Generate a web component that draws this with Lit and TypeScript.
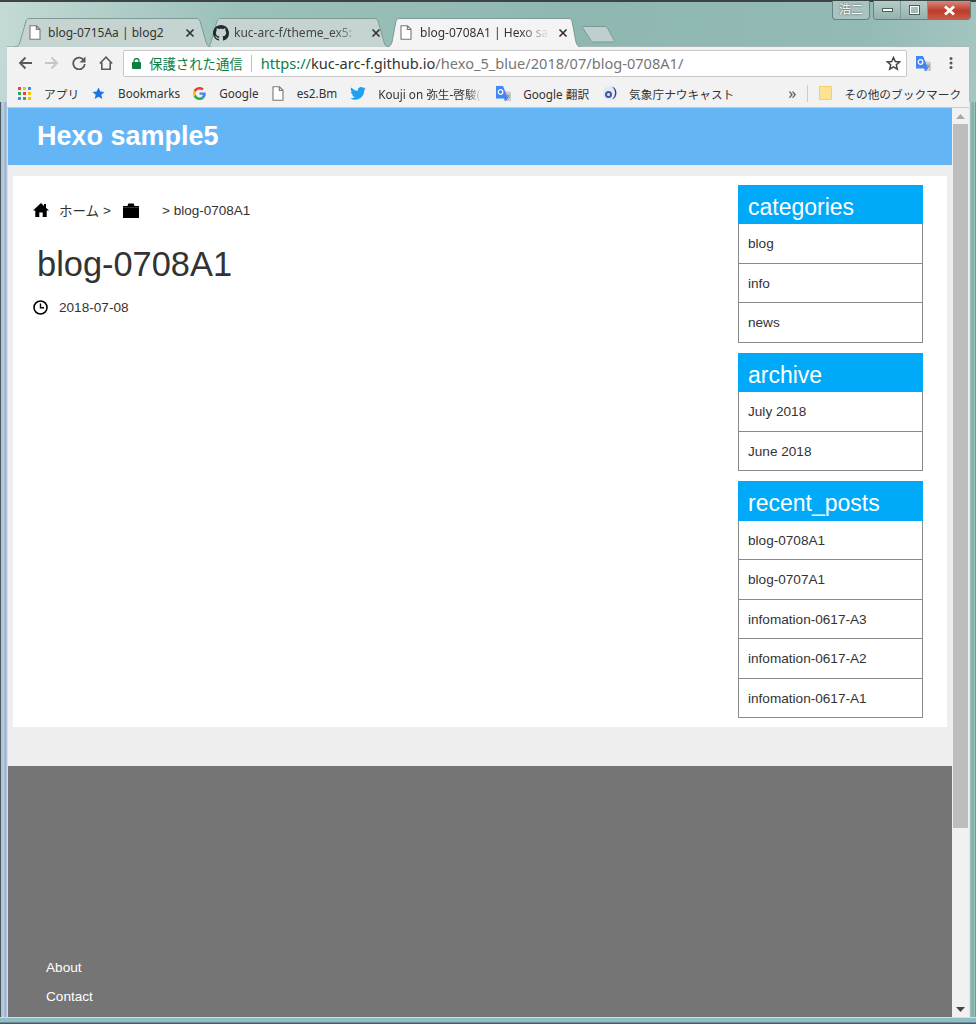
import { LitElement, html, css, svg } from "lit";
import { customElement } from "lit/decorators.js";

const doc = (cls = "ic") => html`<svg class=${cls} width="12" height="15" viewBox="0 0 12 15"><path d="M1 .8h6.500L11 4.300v9.900H1z M7.300 .8v3.700H11" fill="#fff" stroke="#777" stroke-width="1.100"/></svg>`;
const closeX = html`<svg class="x" width="10" height="10" viewBox="0 0 10 10"><path d="M1.500 1.500l7 7m0-7l-7 7" stroke="#333" stroke-width="1.700"/></svg>`;
const translate = html`<svg width="17" height="17" viewBox="0 0 17 17"><path d="M9 6l7 1v9l-5 0z" fill="#c9ccd0"/><path d="M12 9.500l2.600 3.500m0-3.500l-2.600 3.500" stroke="#888" stroke-width="1"/><path d="M1 1h7l5 12.500-3 3-1-3H1z" fill="#4285f4"/><circle cx="5.500" cy="7" r="2.300" fill="none" stroke="#fff" stroke-width="1.200"/></svg>`;

@customElement("app-root")
export class AppRoot extends LitElement {
  static styles = css`
    :host { display: block; width: 976px; height: 1024px; overflow: hidden; font-family: "Liberation Sans", Arial, sans-serif; color: #333; }
    .win { position: relative; box-sizing: border-box; width: 976px; height: 1024px; display: flex; flex-direction: column; padding: 0 7px 7px 7px;
      background:
        linear-gradient(180deg, #d5dde0 0 1px, #8fbcc9 1px, #8fbcc9 5px, #4d5a5c 6px) 0 100% / 100% 7px no-repeat,
        linear-gradient(90deg, #4d5a5c 0 1px, #9db9d4 1px, #b9d3ec 3px, #90aac8 6px, #d8dfe4 7px) 0 100px / 8px 100% no-repeat,
        linear-gradient(90deg, #dfe6e6 0 1px, #9cc6c0 1px, #7fa9a4 4px, #a8ccc8 6px, #4d5a5c 7px) 100% 100px / 7px 100% no-repeat,
        linear-gradient(100deg, #c4dad6 0%, #9cc1bb 20%, #8fb7b1 50%, #93bab5 75%, #bcd5d1 100%);
      border-top: 2px solid #3c4543; }
    .chromef { font-family: "Noto Sans", "Noto Sans CJK JP", sans-serif; }
    .controls { position: absolute; top: -1px; right: 5px; display: flex; gap: 3px; }
    .user { width: 36px; height: 18px; border: 1px solid #66807c; border-top: none; border-radius: 0 0 4px 4px; background: #a9c4c0; font: 12px "Noto Sans CJK JP", sans-serif; color: #fff; text-align: center; line-height: 16px; text-shadow: 0 0 2px #333; }
    .btns { display: flex; height: 18px; border: 1px solid #66807c; border-top: none; border-radius: 0 0 4px 4px; overflow: hidden; }
    .b { width: 26px; display: flex; align-items: center; justify-content: center; background: linear-gradient(#b5cdc9, #94b2ae); border-right: 1px solid #7f9a96; }
    .b.close { width: 42px; border: none; background: linear-gradient(#d9897c, #bd3a28 55%, #c95a48); }
    .tabs { display: flex; align-items: flex-end; height: 29px; margin-top: 16px; padding-left: 7px; position: relative; z-index: 1; margin-bottom: -1px; }
    .tab { position: relative; height: 29px; display: flex; align-items: center; font-size: 12px; box-sizing: border-box; color: #333; flex: none; }
    .tab .shape { position: absolute; inset: 0; width: 100%; height: 100%; }
    .tab > *:not(.shape) { position: relative; }
    .t1 { width: 198px; padding-left: 15px; z-index: 1; }
    .t2 { width: 185px; margin-left: -7px; padding-left: 8px; z-index: 0; }
    .t3 { width: 196px; margin-left: -4px; padding-left: 14px; z-index: 2; }
    .tlabel { white-space: nowrap; overflow: hidden; margin-left: 7px; width: 134px; }
    .t2 .tlabel { margin-left: 5px; color: #444; }
    .t3 .tlabel { margin-left: 8px; width: 135px; }
    .tlabel.fade { -webkit-mask-image: linear-gradient(90deg, #000 74%, transparent 96%); mask-image: linear-gradient(90deg, #000 74%, transparent 96%); }
    .x { margin-left: 3px; }
    .newtab { margin-bottom: 4px; }
    .toolbar { display: flex; align-items: center; height: 33px; background: #f2f2f2; border-top: 1px solid #a9b8b6; box-sizing: border-box; padding-left: 11px; position: relative; }
    .nav { display: flex; align-items: center; gap: 13px; width: 105px; flex: none; }
    .addr { display: flex; align-items: center; box-sizing: border-box; width: 784px; height: 27px; background: #fff; border: 1px solid #c8c8c8; border-radius: 2px; padding: 0 5px 0 8px; font-size: 14.6px; white-space: nowrap; }
    .sec { color: #0b8043; font-size: 13.4px; margin-left: 8px; }
    .sep { width: 1px; height: 17px; background: #c0c0c0; margin: 0 9px 0 8px; }
    .scheme { color: #0b8043; } .host { color: #333; } .path { color: #777; }
    .spacer { flex: 1; }
    .tr { margin-left: 8px; width: 17px; display: flex; }
    .dots { margin-left: 17px; display: flex; }
    .bookmarks { display: flex; align-items: center; height: 29px; background: #f2f2f2; padding-left: 11px; font-size: 11.7px; white-space: nowrap; color: #333; box-sizing: border-box; border-bottom: 1px solid #c9c9c9; }
    .bm { display: flex; align-items: center; gap: 13px; margin-right: 13px; flex: none; }
    .bm svg { flex: none; }
    .bm.last { gap: 12px; margin-right: 0; }
    .tight { gap: 11px; } .twit { gap: 12px; }
    .clip { width: 104px; overflow: hidden; -webkit-mask-image: linear-gradient(90deg, #000 85%, transparent); mask-image: linear-gradient(90deg, #000 85%, transparent); }
    .more { margin-left: 41px; width: 19px; flex: none; color: #555; font-size: 16px; line-height: 16px; }
    .bsep { width: 1px; height: 17px; background: #ccc; margin-right: 11px; flex: none; }
    .view { flex: 1; min-height: 0; display: flex; overflow: hidden; }
    .page { width: 944px; flex: none; background: #eee; display: flex; flex-direction: column; margin-left: 1px; }
    .hdr { height: 57px; background: #64b5f6; display: flex; align-items: center; padding-left: 29px; box-sizing: border-box; color: #fff; font-weight: 700; font-size: 27px; margin-bottom: 11px; flex: none; }
    .main { margin: 0 5px; height: 551px; background: #fff; display: flex; box-sizing: border-box; flex: none; }
    .content { width: 725px; flex: none; padding: 24px 0 0 20px; box-sizing: border-box; }
    .crumb { display: flex; align-items: center; height: 20px; font-size: 13.5px; color: #333; white-space: nowrap; }
    .crumb .jp { font-family: "Noto Sans CJK JP", sans-serif; margin-left: 10px; }
    .m4 { margin-left: 4px; } .m12 { margin-left: 12px; } .m23 { margin-left: 23px; } .m11 { margin-left: 11px; }
    h1 { font-weight: 400; font-size: 34.4px; line-height: 44px; margin: 22px 0 0 4px; color: #333; }
    .date { display: flex; align-items: center; font-size: 13.6px; margin-top: 11px; height: 20px; }
    .side { width: 185px; padding-top: 9px; flex: none; }
    .box { margin-bottom: 10px; }
    .box h3 { margin: 0; height: 39.4px; line-height: 44px; background: #00aaf9; color: #fff; font-weight: 400; font-size: 23px; padding-left: 10px; box-sizing: border-box; }
    .list { border: 1px solid #8a8a8a; border-top: none; }
    .item { height: 39.5px; box-sizing: border-box; font-size: 13.6px; line-height: 39px; padding-left: 9px; border-bottom: 1px solid #8a8a8a; color: #333; }
    .item:last-child { border-bottom: none; height: 38.5px; }
    .gapz { height: 39px; flex: none; }
    .foot { flex: 1; background: #757575; color: #fff; font-size: 13.6px; padding: 192px 0 0 38px; box-sizing: border-box; }
    .foot div { height: 29px; line-height: 20px; }
    .sb { width: 17px; flex: none; background: #f1f1f1; display: flex; flex-direction: column; align-items: center; }
    .thumb { width: 15px; height: 704px; background: #bdbdbd; flex: none; }
    .arrow { height: 16px; flex: none; display: flex; align-items: center; justify-content: center; width: 100%; }
    .grow { flex: 1; }
  `;

  private tabShape(fill: string, stroke: string, w: number, inset: number) {
    return svg`<svg class="shape" viewBox="0 0 ${w} 29" preserveAspectRatio="none"><path d="M.5 29C4 29 5 27 6 24L${inset} 3C${inset + 1} 1 ${inset + 2} .5 ${inset + 4} .5H${w - inset - 4}C${w - inset - 2} .5 ${w - inset - 1} 1 ${w - inset} 3L${w - 6} 24C${w - 5} 27 ${w - 4} 29 ${w - .5} 29" fill=${fill} stroke=${stroke}/></svg>`;
  }

  private box(title: string, items: string[]) {
    return html`<div class="box"><h3>${title}</h3><div class="list">${items.map(i => html`<div class="item">${i}</div>`)}</div></div>`;
  }

  render() {
    return html`<div class="win">
      <div class="controls">
        <div class="user">浩二</div>
        <div class="btns">
          <div class="b"><svg width="11" height="5" viewBox="0 0 11 5"><rect x=".5" y=".5" width="10" height="3" fill="#fff" stroke="#4b5f5c"/></svg></div>
          <div class="b"><svg width="11" height="10" viewBox="0 0 11 10"><rect x="1" y="1" width="9" height="8" fill="none" stroke="#fff" stroke-width="2"/><rect x=".5" y=".5" width="10" height="9" fill="none" stroke="#4b5f5c"/></svg></div>
          <div class="b close"><svg width="15" height="11" viewBox="0 0 15 11"><path d="M3 1.500l9 8m0-8l-9 8" stroke="#fff" stroke-width="3"/></svg></div>
        </div>
      </div>
      <div class="tabs chromef">
        <div class="tab t1">${this.tabShape("#c5d3d1", "#7e9a96", 198, 12)}${doc()}<span class="tlabel">blog-0715Aa | blog2</span>${closeX}</div>
        <div class="tab t2">${this.tabShape("#c5d3d1", "#7e9a96", 185, 12)}
          <svg width="16" height="16" viewBox="0 0 16 16"><path fill="#24292e" d="M8 0C3.580 0 0 3.580 0 8c0 3.540 2.290 6.530 5.470 7.590.4.070.55-.17.55-.38 0-.19-.01-.82-.01-1.490-2.010.37-2.530-.49-2.690-.94-.09-.23-.48-.94-.82-1.130-.28-.15-.68-.52-.01-.53.630-.01 1.080.58 1.230.82.720 1.210 1.870.87 2.330.66.070-.52.280-.87.510-1.070-1.780-.2-3.640-.89-3.640-3.950 0-.87.310-1.590.82-2.150-.08-.2-.36-1.020.08-2.120 0 0 .67-.21 2.200.82.640-.18 1.320-.27 2-.27s1.360.09 2 .27c1.530-1.040 2.200-.82 2.200-.82.440 1.100.16 1.920.08 2.120.51.560.82 1.270.82 2.150 0 3.070-1.870 3.750-3.650 3.950.290.250.540.730.540 1.480 0 1.070-.01 1.930-.01 2.200 0 .21.150.460.550.380A8.010 8.010 0 0 0 16 8c0-4.420-3.580-8-8-8z"/></svg>
          <span class="tlabel fade">kuc-arc-f/theme_ex5:</span>${closeX}</div>
        <div class="tab t3">${this.tabShape("#f4f4f4", "#7e9a96", 196, 10)}${doc()}<span class="tlabel fade">blog-0708A1 | Hexo sample5</span>${closeX}</div>
        <svg class="newtab" width="34" height="18" viewBox="0 0 34 18"><path d="M1 1.500h22c1 0 2 .5 2.500 1.500L32 15c.5 1 0 2-1 2H11c-1 0-1.600-.4-2-1.500L.8 3C.4 2 .4 1.500 1 1.500z" fill="#bfcfcd" stroke="#7e9a96"/></svg>
      </div>
      <div class="toolbar chromef">
        <div class="nav">
          <svg width="14" height="14" viewBox="0 0 14 14"><path d="M14 7H2M7.500 1.500L2 7l5.500 5.500" fill="none" stroke="#5a5a5a" stroke-width="1.800"/></svg>
          <svg width="14" height="14" viewBox="0 0 14 14"><path d="M0 7h12M6.500 1.500L12 7l-5.500 5.500" fill="none" stroke="#c6c6c6" stroke-width="1.800"/></svg>
          <svg width="14" height="14" viewBox="0 0 14 14"><path d="M12 4.500A5.800 5.800 0 1 0 12.800 8" fill="none" stroke="#5a5a5a" stroke-width="1.800"/><path d="M13.500 .5v6h-6z" fill="#5a5a5a"/></svg>
          <svg width="14" height="14" viewBox="0 0 14 14"><path d="M.8 7.500L7 1.200l6.200 6.300M2.800 6.500v6.700h8.400V6.500" fill="none" stroke="#5a5a5a" stroke-width="1.600"/></svg>
        </div>
        <div class="addr">
          <svg width="9" height="11" viewBox="0 0 9 11"><rect y="4" width="9" height="7" rx="1" fill="#0b8043"/><path d="M2 4.500V3a2.500 2.500 0 0 1 5 0v1.500" fill="none" stroke="#0b8043" stroke-width="1.300"/></svg>
          <span class="sec">保護された通信</span><span class="sep"></span>
          <span><span class="scheme">https://</span><span class="host">kuc-arc-f.github.io</span><span class="path">/hexo_5_blue/2018/07/blog-0708A1/</span></span>
          <span class="spacer"></span>
          <svg width="15" height="15" viewBox="0 0 15 15"><path d="M7.500 1.500l1.800 4 4.300.4-3.300 2.900 1 4.300-3.800-2.300-3.800 2.300 1-4.300-3.300-2.900 4.300-.4z" fill="none" stroke="#444" stroke-width="1.500"/></svg>
        </div>
        <span class="tr">${translate}</span>
        <span class="dots"><svg width="4" height="14" viewBox="0 0 4 14"><circle cx="2" cy="2.500" r="1.500" fill="#5a5a5a"/><circle cx="2" cy="7" r="1.500" fill="#5a5a5a"/><circle cx="2" cy="11.500" r="1.500" fill="#5a5a5a"/></svg></span>
      </div>
      <div class="bookmarks chromef">
        <div class="bm"><svg width="13" height="13" viewBox="0 0 13 13">${[0,5,10].flatMap((y,r)=>[0,5,10].map((x,c)=>svg`<rect x=${x} y=${y} width="3" height="3" fill=${[["#ea4335","#fbbc05","#4285f4"],["#34a853","#ea4335","#fbbc05"],["#4285f4","#34a853","#fbbc05"]][r][c]}/>`))}</svg><span>アプリ</span></div>
        <div class="bm"><svg width="13" height="13" viewBox="0 0 13 13"><path d="M6.500 .5l1.800 4 4.200.4-3.200 2.800 1 4.300-3.800-2.300-3.800 2.300 1-4.300L.5 4.900l4.200-.4z" fill="#1a73e8"/></svg><span>Bookmarks</span></div>
        <div class="bm"><svg width="13" height="13" viewBox="0 0 48 48"><path fill="#ea4335" d="M24 9.500c3.500 0 6.700 1.300 9.200 3.400l6.900-6.900C35.900 2.400 30.300 0 24 0 14.600 0 6.500 5.400 2.600 13.200l8 6.200C12.400 13.700 17.700 9.500 24 9.500z"/><path fill="#4285f4" d="M47 24.500c0-1.600-.1-3.100-.4-4.500H24v9h12.900c-.6 3-2.200 5.500-4.700 7.200l7.700 6C44.400 37.900 47 31.800 47 24.500z"/><path fill="#fbbc05" d="M10.600 28.600c-.5-1.400-.8-3-.8-4.600s.3-3.200.8-4.600l-8-6.200C.9 16.500 0 20.100 0 24s.9 7.500 2.600 10.800z"/><path fill="#34a853" d="M24 48c6.500 0 11.900-2.100 15.900-5.800l-7.700-6c-2.200 1.500-4.900 2.300-8.200 2.300-6.300 0-11.600-4.200-13.400-9.900l-8 6.200C6.500 42.600 14.600 48 24 48z"/></svg><span>Google</span></div>
        <div class="bm">${doc("")}<span>es2.Bm</span></div>
        <div class="bm twit"><svg width="16" height="13" viewBox="0 0 24 20"><path fill="#1da1f2" d="M24 2.400a9.800 9.800 0 0 1-2.800.8A4.900 4.900 0 0 0 23.300.5a9.800 9.800 0 0 1-3.100 1.200 4.900 4.900 0 0 0-8.400 4.500A14 14 0 0 1 1.700.9a4.900 4.900 0 0 0 1.500 6.600 4.900 4.900 0 0 1-2.200-.6c0 2.400 1.700 4.500 4 5a4.900 4.900 0 0 1-2.200.1 4.900 4.900 0 0 0 4.600 3.400A9.900 9.900 0 0 1 0 17.400 14 14 0 0 0 21.500 5c1-.7 1.900-1.600 2.500-2.600z"/></svg><span class="clip">Kouji on 弥生-啓駿(株)</span></div>
        <div class="bm tight">${translate}<span>Google 翻訳</span></div>
        <div class="bm tight"><svg width="16" height="16" viewBox="0 0 16 16"><circle cx="8" cy="8" r="7" fill="#e4e8f2"/><path d="M10 1.500a7 7 0 0 1 0 13c2-2 3-4 3-6.500s-1-4.500-3-6.500z" fill="#2a3f8f"/><circle cx="6.500" cy="9.500" r="3.500" fill="#3c5aa8"/><circle cx="6.500" cy="9.500" r="1.500" fill="#dfe6f5"/></svg><span>気象庁ナウキャスト</span></div>
        <span class="more">»</span><span class="bsep"></span>
        <div class="bm last"><svg width="13" height="14" viewBox="0 0 13 14"><path d="M.5.5h12v13H.5z" fill="#fde293" stroke="#f3cf6c"/></svg><span>その他のブックマーク</span></div>
      </div>
      <div class="view">
        <div class="page">
          <div class="hdr">Hexo sample5</div>
          <div class="main">
            <div class="content">
              <div class="crumb">
                <svg width="16" height="16" viewBox="0 0 16 16"><path d="M8 1L0 8.500h2.300V15h4V10.500h3.400V15h4V8.500H16l-3-2.800V2h-2v1.900z" fill="#000"/></svg>
                <span class="jp">ホーム</span><span class="m4">&gt;</span>
                <svg class="m12" width="16" height="15" viewBox="0 0 16 15"><path d="M0 3h4.500l.8-2.500h5.400l.8 2.500H16v12H0z" fill="#000"/><rect y="4.200" width="16" height=".6" fill="#555"/></svg>
                <span class="m23">&gt; blog-0708A1</span>
              </div>
              <h1>blog-0708A1</h1>
              <div class="date">
                <svg width="15" height="15" viewBox="0 0 15 15"><circle cx="7.500" cy="7.500" r="6.500" fill="none" stroke="#000" stroke-width="1.600"/><path d="M7.500 3.500v4.300H11" fill="none" stroke="#000" stroke-width="1.400"/></svg>
                <span class="m11">2018-07-08</span>
              </div>
            </div>
            <div class="side">
              ${this.box("categories", ["blog", "info", "news"])}
              ${this.box("archive", ["July 2018", "June 2018"])}
              ${this.box("recent_posts", ["blog-0708A1", "blog-0707A1", "infomation-0617-A3", "infomation-0617-A2", "infomation-0617-A1"])}
            </div>
          </div>
          <div class="gapz"></div>
          <div class="foot"><div>About</div><div>Contact</div></div>
        </div>
        <div class="sb">
          <div class="arrow"><svg width="9" height="5" viewBox="0 0 9 5"><path d="M4.500 0L9 5H0z" fill="#aaa"/></svg></div>
          <div class="thumb"></div>
          <div class="grow"></div>
          <div class="arrow"><svg width="9" height="5" viewBox="0 0 9 5"><path d="M4.500 5L9 0H0z" fill="#444"/></svg></div>
        </div>
      </div>
    </div>`;
  }
}
